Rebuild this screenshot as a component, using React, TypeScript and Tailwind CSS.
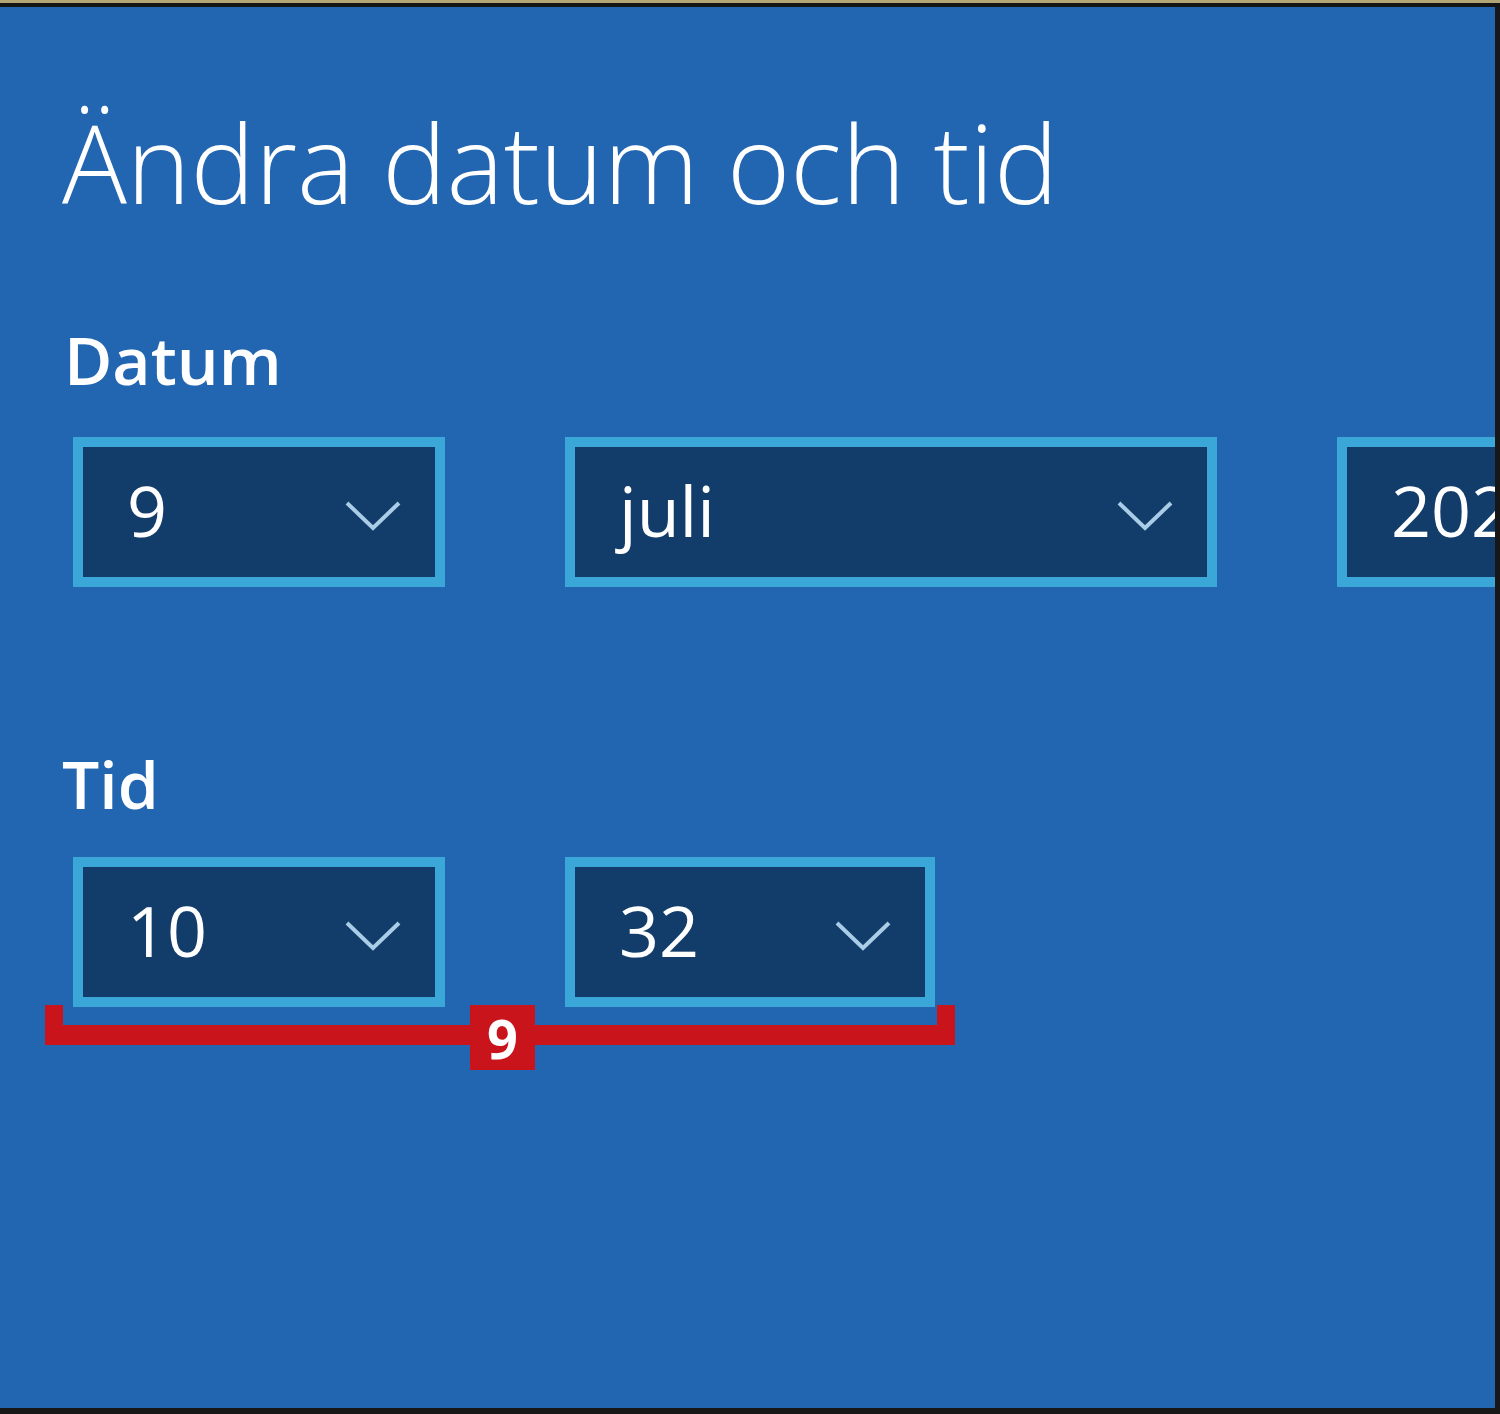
function Chevron() {
  return (
    <svg width="56" height="30" viewBox="0 0 56 30" className="shrink-0 mt-[8px]">
      <path d="M2 2 L28 27 L54 2" fill="none" stroke="#a9cde6" strokeWidth="4" />
    </svg>
  )
}

function Select({ value, width }: { value: string; width: string }) {
  return (
    <div className={`${width} h-[150px] shrink-0 border-[10px] border-[#3ba7d9] bg-[#123c6a] flex items-center justify-between pl-[44px] pr-[34px]`}>
      <span className="text-[70px] leading-none text-white -mt-[4px] whitespace-nowrap">{value}</span>
      <Chevron />
    </div>
  )
}

export default function App() {
  return (
    <div
      className="w-[1500px] h-[1414px] overflow-hidden bg-[#171717] flex flex-col"
      style={{ fontFamily: '"Open Sans", "Noto Sans", sans-serif' }}
    >
      <div className="h-[3px] bg-[#b3a676]" />
      <div className="h-[4px] bg-[#141414]" />
      <div className="relative flex-1 mr-[5px] mb-[6px] bg-[#2265b1] overflow-hidden pl-[65px]">
        <h1 className="mt-[86px] text-[108px] font-light leading-[140px] text-white -ml-[3px] whitespace-nowrap">
          Ändra datum och tid
        </h1>

        <div className="mt-[86px] text-[66px] font-semibold leading-[80px] text-white -ml-[1px]">Datum</div>
        <div className="mt-[38px] ml-[8px] flex gap-[120px]">
          <Select value="9" width="w-[372px]" />
          <Select value="juli" width="w-[652px]" />
          <Select value="2024" width="w-[652px]" />
        </div>

        <div className="mt-[156px] text-[66px] font-semibold leading-[80px] text-white -ml-[3px]">Tid</div>
        <div className="mt-[34px] ml-[8px] flex gap-[120px]">
          <Select value="10" width="w-[372px]" />
          <Select value="32" width="w-[370px]" />
        </div>

        {/* annotation bracket */}
        <div className="absolute left-[45px] top-[998px] w-[910px] h-[40px] border-x-[18px] border-b-[20px] border-[#c8141a]" />
        <div className="absolute left-[470px] top-[998px] w-[65px] h-[65px] bg-[#c8141a] flex items-center justify-center">
          <span className="text-[54px] font-bold leading-none text-white">9</span>
        </div>
      </div>
    </div>
  )
}
